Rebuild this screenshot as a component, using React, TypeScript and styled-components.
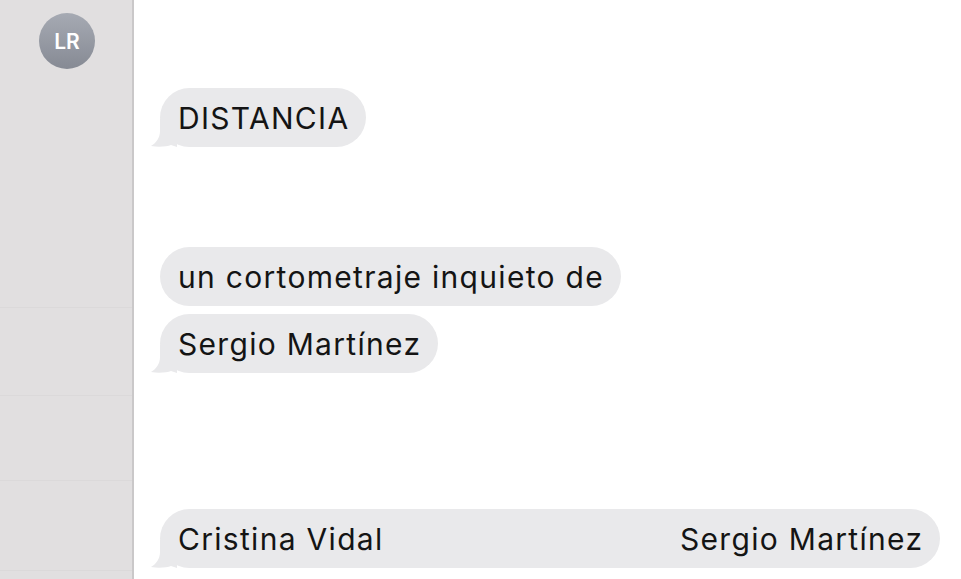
import React from "react";
import styled, { createGlobalStyle } from "styled-components";

const Global = createGlobalStyle`
  html, body { margin: 0; padding: 0; background: #ffffff; }
  body { font-family: Inter, "Liberation Sans", sans-serif; }
`;

const Layout = styled.div`
  display: flex;
  width: 961px;
  height: 579px;
  overflow: hidden;
`;

const Sidebar = styled.div`
  width: 132px;
  flex-shrink: 0;
  background: #e1dfe0;
  border-right: 2px solid #cac8c9;
  display: flex;
  flex-direction: column;
`;

const SidebarRow = styled.div<{ h: number }>`
  height: ${(p) => p.h}px;
  flex-shrink: 0;
  border-bottom: 1px solid #dbd9da;
  display: flex;
  justify-content: center;
  &:last-child { border-bottom: none; flex: 1; }
`;

const Avatar = styled.div`
  margin-top: 13px;
  margin-left: 2px;
  width: 56px;
  height: 56px;
  border-radius: 50%;
  background: linear-gradient(180deg, #a6aab3 0%, #868a94 100%);
  color: #ffffff;
  font-size: 21px;
  font-weight: 600;
  display: flex;
  align-items: center;
  justify-content: center;
`;

const Chat = styled.div`
  flex: 1;
  display: flex;
  flex-direction: column;
  padding: 0 21px 0 26px;
`;

const Group = styled.div<{ top: number }>`
  margin-top: ${(p) => p.top}px;
  display: flex;
  flex-direction: column;
  gap: 8px;
  align-items: flex-start;
`;

const Bubble = styled.div<{ wide?: boolean }>`
  position: relative;
  background: #e9e9eb;
  color: #141414;
  border-radius: 30px;
  height: 59px;
  padding: 0 18px;
  display: flex;
  align-items: center;
  justify-content: space-between;
  font-size: 30px;
  letter-spacing: 1.3px;
  box-sizing: border-box;
  white-space: nowrap;
  align-self: ${(p) => (p.wide ? "stretch" : "flex-start")};
`;

const Text = styled.span`
  margin-right: -1.3px;
`;

const Tail = styled.svg`
  position: absolute;
  left: -9px;
  bottom: 0;
  width: 26px;
  height: 28px;
`;

const BubbleTail = () => (
  <Tail viewBox="0 0 26 28">
    <path
      d="M9 0 L26 0 L26 28 L20 26 C16 27.5 8 28.5 0 27 C5 24 9 19 9 12 Z"
      fill="#e9e9eb"
    />
  </Tail>
);

type Msg = { parts: string[]; tail?: boolean; wide?: boolean };

const groups: { top: number; msgs: Msg[] }[] = [
  { top: 88, msgs: [{ parts: ["DISTANCIA"], tail: true }] },
  {
    top: 100,
    msgs: [
      { parts: ["un cortometraje inquieto de"] },
      { parts: ["Sergio Martínez"], tail: true },
    ],
  },
  {
    top: 136,
    msgs: [{ parts: ["Cristina Vidal", "Sergio Martínez"], tail: true, wide: true }],
  },
];

const App = () => {
  return (
    <>
      <Global />
      <Layout>
        <Sidebar>
          <SidebarRow h={307}>
            <Avatar>LR</Avatar>
          </SidebarRow>
          <SidebarRow h={87} />
          <SidebarRow h={84} />
          <SidebarRow h={89} />
          <SidebarRow h={9} />
        </Sidebar>
        <Chat>
          {groups.map((g, i) => (
            <Group key={i} top={g.top}>
              {g.msgs.map((m, j) => (
                <Bubble key={j} wide={m.wide}>
                  {m.tail && <BubbleTail />}
                  {m.parts.map((t) => (
                    <Text key={t}>{t}</Text>
                  ))}
                </Bubble>
              ))}
            </Group>
          ))}
        </Chat>
      </Layout>
    </>
  );
};

export default App;
